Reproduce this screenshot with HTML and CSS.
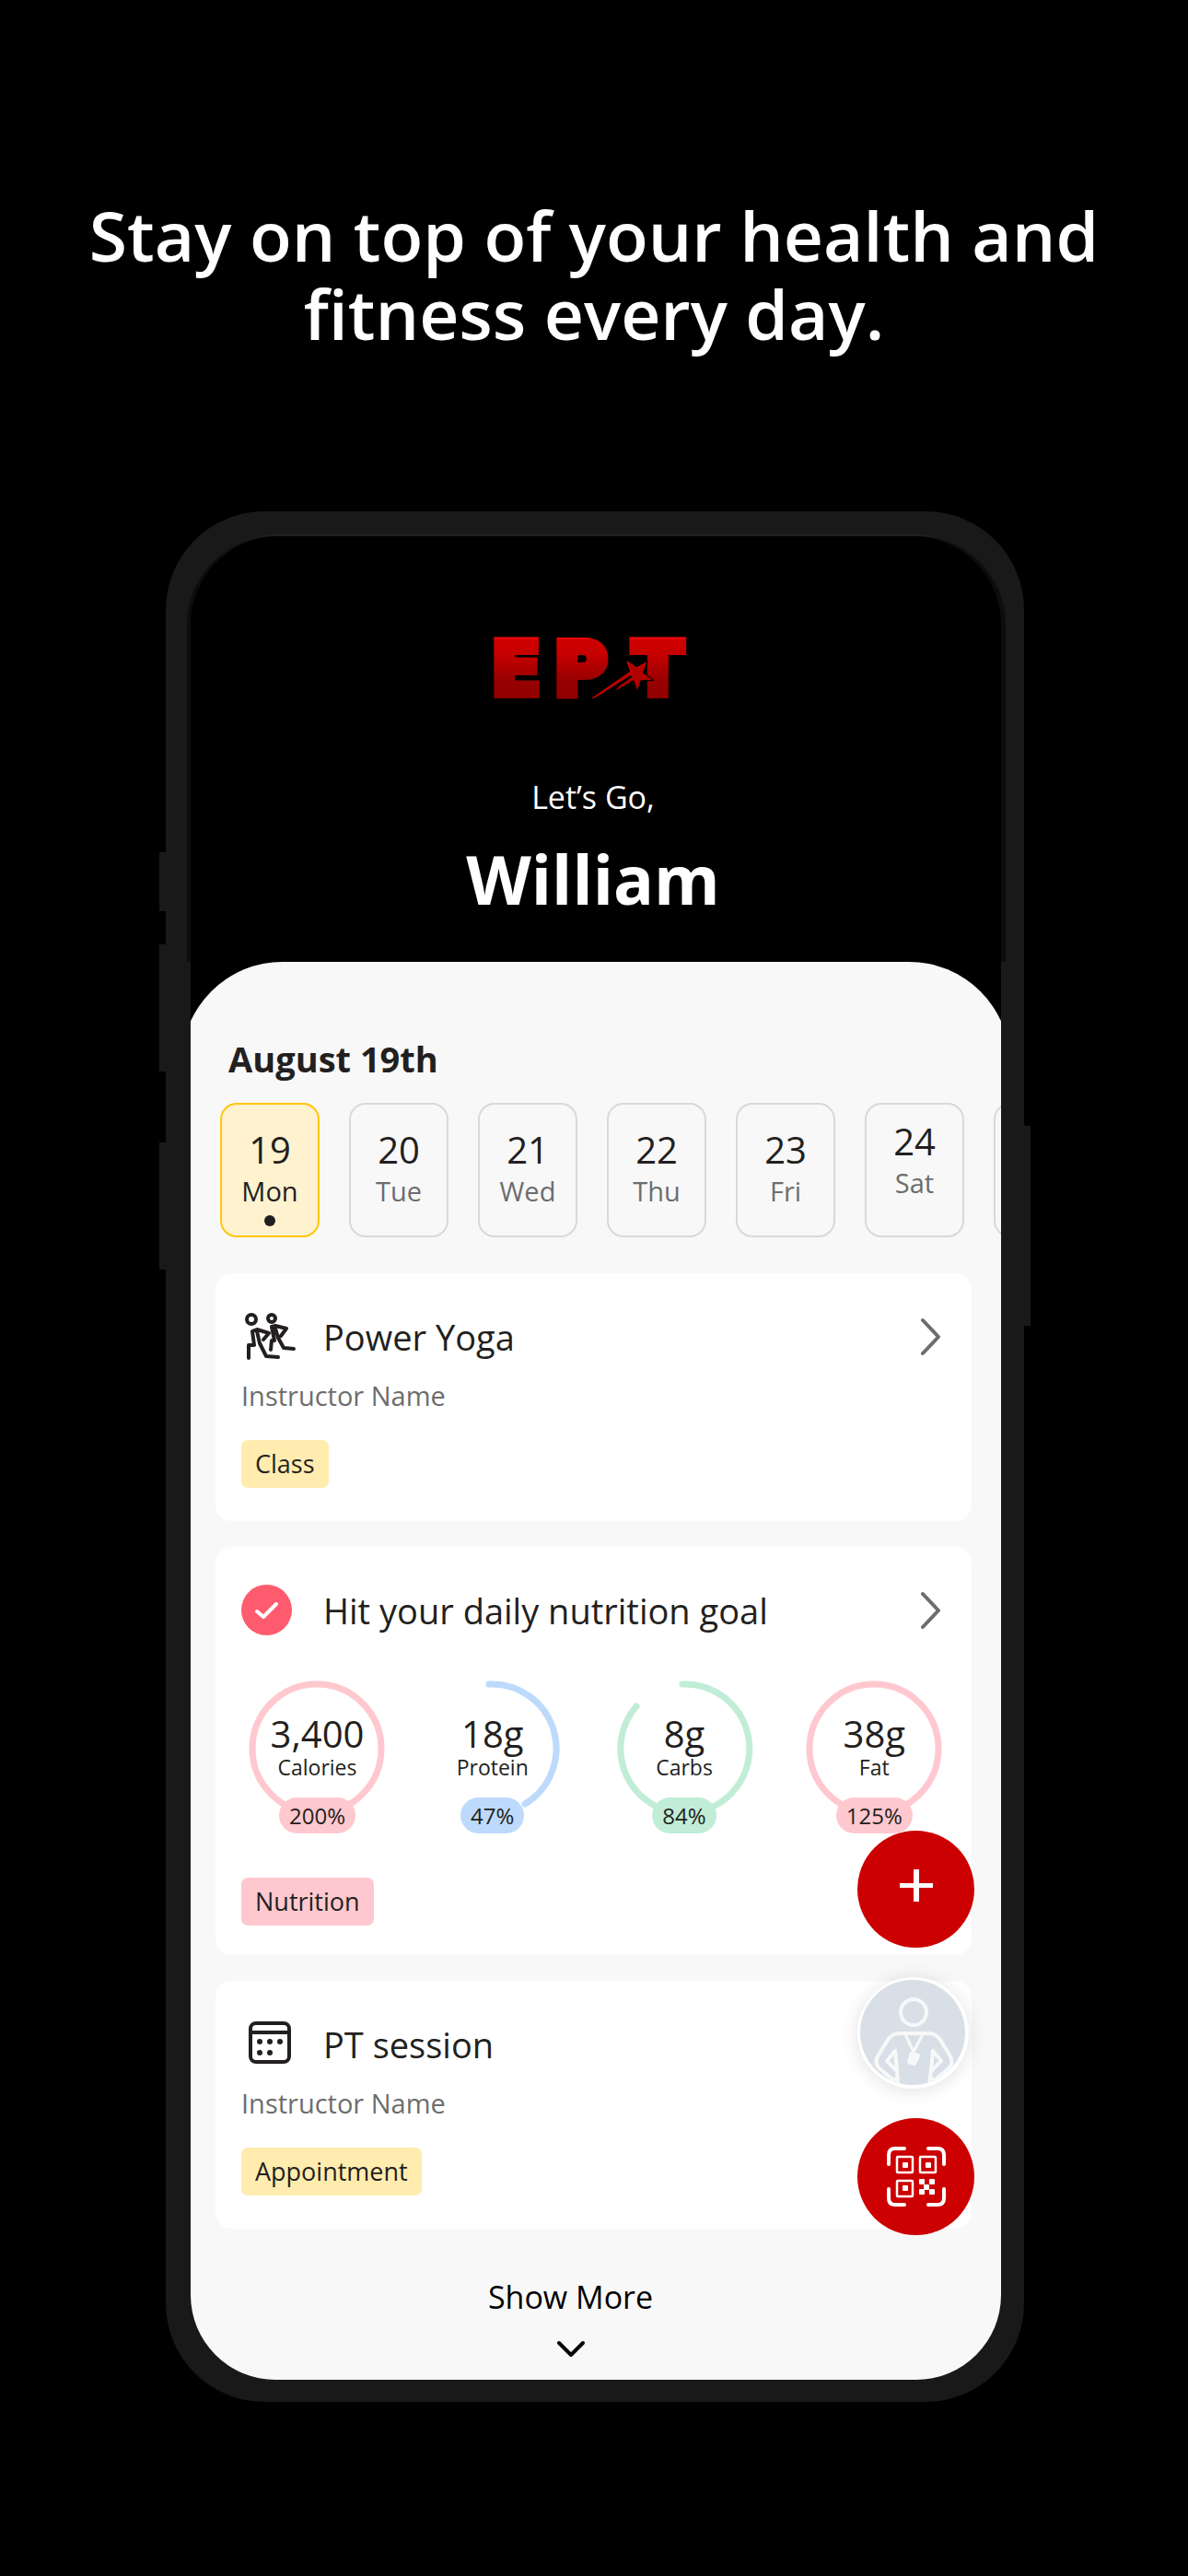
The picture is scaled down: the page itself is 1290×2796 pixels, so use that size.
FILE: index.html
```html
<!DOCTYPE html>
<html lang="en">
<head>
	<meta charset="UTF-8">
	<meta name="viewport" content="width=device-width, initial-scale=1">
	<title>EPT</title>
	<link rel="stylesheet" href="styles.css">
</head>
<body>

	<main class="page">
		<h1 class="headline">Stay on top of your health and fitness every day.</h1>

		<div class="phone">
			<!-- side buttons -->
			<span class="side-key key-mute"></span>
			<span class="side-key key-up"></span>
			<span class="side-key key-down"></span>
			<span class="side-key key-power"></span>

			<header class="top">
				<svg class="logo" viewBox="0 0 219 66" role="img" aria-label="EPT">
					<defs>
						<linearGradient id="red" gradientUnits="userSpaceOnUse" x1="0" y1="0" x2="0" y2="66">
							<stop offset="0" stop-color="#ff0a0a"/>
							<stop offset="0.04" stop-color="#d00000"/>
							<stop offset="0.3" stop-color="#c40000"/>
							<stop offset="0.7" stop-color="#980000"/>
							<stop offset="1" stop-color="#900000"/>
						</linearGradient>
					</defs>
					<text class="logo-text" x="-2 66 152" y="62" fill="url(#red)" stroke="url(#red)">EPT</text>
					<path d="M108 66 L150 37 L146 26 L156 33 L167 27 L163 38 L173 46 L161 46 L157 57 L153 46 L133 58 L137 53 L151 43 L150 41 L112 65 Z" fill="#b00000" stroke="#000" stroke-width="2" paint-order="stroke"/>
					<path d="M108 66 L150 37 L146 26 L156 33 L167 27" fill="none" stroke="#f00000"/>
				</svg>
				<p class="greeting">Let’s Go,</p>
				<h2 class="name">William</h2>
			</header>

			<div class="clip">
				<section class="sheet">
					<h3 class="date">August 19th</h3>

					<div class="days">
						<button class="day active" type="button"><span class="num">19</span><span class="weekday">Mon</span><i class="dot"></i></button>
						<button class="day" type="button"><span class="num">20</span><span class="weekday">Tue</span></button>
						<button class="day" type="button"><span class="num">21</span><span class="weekday">Wed</span></button>
						<button class="day" type="button"><span class="num">22</span><span class="weekday">Thu</span></button>
						<button class="day" type="button"><span class="num">23</span><span class="weekday">Fri</span></button>
						<button class="day raised" type="button"><span class="num">24</span><span class="weekday">Sat</span></button>
						<button class="day" type="button" aria-label="Next day"></button>
					</div>

					<article class="card">
						<div class="card-head">
							<svg class="icon" viewBox="0 0 55 55" fill="none" stroke="#231f20" stroke-width="4" stroke-linecap="round" stroke-linejoin="round">
								<circle cx="11" cy="9" r="5"/>
								<circle cx="33" cy="8" r="4"/>
								<path d="M8 51V37H14L12 22L17 20L30 24L24 31M17 22L20 35L27 49L40 50"/>
								<path d="M32 42L33 32H36L33 17L37 16L49 19L43 27M37 19L40 29L46 40L57 41"/>
							</svg>
							<h4 class="title">Power Yoga</h4>
							<a class="go" href="#" aria-label="Open Power Yoga">
								<svg width="24" height="41" viewBox="0 0 24 41"><path d="M3 3L20 21L3 39"/></svg>
							</a>
						</div>
						<p class="sub">Instructor Name</p>
						<span class="tag">Class</span>
					</article>

					<article class="card nutrition">
						<div class="card-head">
							<svg class="icon" viewBox="0 0 55 55">
								<circle cx="27.5" cy="27.5" r="27.5" fill="#ff5b6e"/>
								<path d="M17 29L24 35L38 21" fill="none" stroke="#fff" stroke-width="4" stroke-linecap="round" stroke-linejoin="round"/>
							</svg>
							<h4 class="title">Hit your daily nutrition goal</h4>
							<a class="go" href="#" aria-label="Open nutrition goal">
								<svg width="24" height="41" viewBox="0 0 24 41"><path d="M3 3L20 21L3 39"/></svg>
							</a>
						</div>

						<div class="rings">
							<div class="ring pink">
								<svg viewBox="0 0 147 147"><circle cx="73" cy="73" r="70"/></svg>
								<div class="ring-text">
									<span class="amount">3,400</span>
									<span class="label">Calories</span>
									<span class="pct">200%</span>
								</div>
							</div>
							<div class="ring blue">
								<svg viewBox="0 0 147 147"><path d="M70 3A70 70 0 0 1 109 133"/></svg>
								<div class="ring-text">
									<span class="amount">18g</span>
									<span class="label">Protein</span>
									<span class="pct">47%</span>
								</div>
							</div>
							<div class="ring green">
								<svg viewBox="0 0 147 147"><path d="M71 3A70 70 0 1 1 21 27"/></svg>
								<div class="ring-text">
									<span class="amount">8g</span>
									<span class="label">Carbs</span>
									<span class="pct">84%</span>
								</div>
							</div>
							<div class="ring pink">
								<svg viewBox="0 0 147 147"><circle cx="73" cy="73" r="70"/></svg>
								<div class="ring-text">
									<span class="amount">38g</span>
									<span class="label">Fat</span>
									<span class="pct">125%</span>
								</div>
							</div>
						</div>
						<span class="tag">Nutrition</span>
					</article>

					<article class="card">
						<div class="card-head">
							<svg class="icon" viewBox="0 0 55 55" fill="none" stroke="#231f20" stroke-width="4">
								<rect x="10" y="5" width="42" height="42" rx="6"/>
								<path d="M10 15H52"/>
								<g fill="#231f20" stroke="none">
									<circle cx="20" cy="25" r="3"/>
									<circle cx="31" cy="25" r="3"/>
									<circle cx="42" cy="25" r="3"/>
									<circle cx="20" cy="37" r="3"/>
									<circle cx="31" cy="37" r="3"/>
								</g>
							</svg>
							<h4 class="title">PT session</h4>
						</div>
						<p class="sub">Instructor Name</p>
						<span class="tag">Appointment</span>
					</article>

					<button class="more" type="button">
						Show More
						<svg width="30" height="18" viewBox="0 0 30 18"><path d="M2 2L15 15L28 2"/></svg>
					</button>
				</section>
			</div>

			<!-- floating buttons -->
			<div class="fabs">
				<button class="fab" type="button" aria-label="Add">
					<svg viewBox="0 0 127 127" fill="#fff"><path d="M61 42H67V57H82V62H67V77H61V62H46V57H61Z"/></svg>
				</button>
				<button class="fab coach" type="button" aria-label="Coach">
					<svg viewBox="0 0 121 121" fill="none" stroke="#f7f8f8" stroke-width="4" stroke-linecap="round" stroke-linejoin="round">
						<clipPath id="round"><circle cx="60" cy="60" r="57"/></clipPath>
						<circle cx="60" cy="60" r="57" fill="#d9dfe6" stroke="none"/>
						<g clip-path="url(#round)">
							<circle cx="61" cy="38" r="14"/>
							<path d="M37 110L24 99Q18 93 22 86L33 68Q38 61 45 61H77Q85 61 90 68L101 86Q105 93 99 99L86 110"/>
							<path d="M44 117L43 101L41 80L32 91L43 102M36 112L44 110"/>
							<path d="M78 117L80 101L82 80L91 91L80 102M87 112L79 110"/>
							<path d="M52 62L61 81L71 62" stroke-width="3"/>
							<path d="M59 83L66 85L62 94L56 92Z" fill="#f7f8f8"/>
						</g>
					</svg>
				</button>
				<button class="fab" type="button" aria-label="Scan QR code">
					<svg viewBox="0 0 127 127" fill="none" stroke="#fff" stroke-width="4" stroke-linecap="round">
						<path d="M34 50V40Q34 33 41 33H51M77 33H87Q94 33 94 40V50M94 77V87Q94 94 87 94H77M51 94H41Q34 94 34 87V77"/>
						<g stroke-width="2.5">
							<rect x="43" y="42" width="17" height="17" rx="1"/>
							<rect x="68" y="42" width="17" height="17" rx="1"/>
							<rect x="43" y="68" width="17" height="17" rx="1"/>
						</g>
						<g fill="#fff" stroke="none">
							<rect x="49" y="48" width="6" height="6" rx="1"/>
							<rect x="74" y="48" width="6" height="6" rx="1"/>
							<rect x="49" y="73" width="6" height="6" rx="1"/>
							<rect x="67" y="66" width="6" height="6" rx="1"/>
							<rect x="78" y="66" width="6" height="6" rx="1"/>
							<rect x="72" y="72" width="6" height="6" rx="1"/>
							<rect x="67" y="77" width="6" height="6" rx="1"/>
							<rect x="78" y="77" width="6" height="6" rx="1"/>
						</g>
					</svg>
				</button>
			</div>
		</div>
	</main>

</body>
</html>
```

FILE: styles.css
```css
*{
	box-sizing: border-box;
}
body{
	margin: 0;
	background: #000;
	color: #231f20;
	font-family: "Open Sans", "Noto Sans", sans-serif;
}
h1,h2,h3,h4,p{
	margin: 0;
	font-weight: 400;
}
button{
	padding: 0;
	border: 0;
	background: none;
	color: inherit;
	font: inherit;
	cursor: pointer;
}
svg{
	display: block;
	overflow: visible;
}

.page{
	padding: 213px 0 189px;
}
.headline{
	padding: 0 60px;
	color: #fff;
	font-size: 75px;
	font-weight: 600;
	line-height: 85px;
	text-align: center;
}

/* phone body */
.phone{
	position: relative;
	margin: 172px 178px 0 180px;
	padding: 27px 25px 24px 27px;
	border-radius: 107px;
	background: #191919;
}
.side-key{
	position: absolute;
	left: -7px;
	width: 7px;
	height: 138px;
	background: #191919;
}
.key-mute{
	top: 370px;
	height: 64px;
}
.key-up{
	top: 470px;
}
.key-down{
	top: 685px;
}
.key-power{
	top: 667px;
	right: -7px;
	left: auto;
	height: 217px;
}

.top{
	display: flex;
	flex-direction: column;
	align-items: center;
	padding: 110px 6px 46px 0;
	border-radius: 96px 96px 0 0;
	background: #000;
	box-shadow: -4px 0 #0d0d0d, 5px 0 #0d0d0d, 0 -2px #231f20;
	color: #fff;
}
.logo{
	width: 219px;
	height: 66px;
}
.logo-text{
	font-family: "DejaVu Sans", sans-serif;
	font-size: 80px;
	font-weight: 700;
	stroke-width: 8px;
}
.greeting{
	margin-top: 85px;
	font-size: 34px;
	line-height: 44px;
}
.name{
	margin-top: 23px;
	font-size: 73px;
	font-weight: 700;
	line-height: 88px;
}

.clip{
	overflow: hidden;
	border-radius: 0 0 92px 92px;
	background: #000;
}
.sheet{
	margin: 0 -10px;
	padding: 80px 42px 24px 37px;
	border-radius: 110px 110px 0 0;
	background: #f8f8f8;
}
.date{
	padding-left: 14px;
	font-size: 38px;
	font-weight: 700;
	line-height: 50px;
}

/* day strip */
.days{
	display: flex;
	gap: 32px;
	margin: 23px -42px 39px 5px;
	overflow: hidden;
}
.day{
	display: flex;
	flex: none;
	flex-direction: column;
	align-items: center;
	justify-content: flex-start;
	width: 108px;
	height: 146px;
	padding-top: 27px;
	border: 2px solid #d9d9d9;
	border-radius: 18px;
}
.day.raised{
	padding-top: 18px;
}
.day.active{
	border-color: #ffc60b;
	background: #fff2cf;
}
.num{
	font-size: 40px;
	line-height: 44px;
}
.weekday{
	margin-top: 5px;
	color: #6d6d6d;
	font-size: 29px;
	line-height: 36px;
}
.active .weekday{
	color: #231f20;
}
.dot{
	width: 12px;
	height: 12px;
	margin-top: 8px;
	border-radius: 50%;
	background: #231f20;
}

/* cards */
.card{
	margin-bottom: 28px;
	padding: 41px 32px 36px 28px;
	border-radius: 18px;
	background: #fff;
}
.card-head{
	display: flex;
	align-items: center;
	height: 55px;
}
.icon{
	width: 55px;
	height: 55px;
	margin-right: 34px;
}
.title{
	flex: 1;
	font-size: 38px;
	line-height: 52px;
}
.go path,.more path{
	fill: none;
	stroke: #6d6d6d;
	stroke-width: 4px;
	stroke-linecap: round;
	stroke-linejoin: round;
}
.sub{
	margin-top: 19px;
	color: #6d6d6d;
	font-size: 29px;
	line-height: 36px;
}
.tag{
	display: inline-block;
	margin-top: 30px;
	padding: 0 15px;
	border-radius: 7px;
	background: #ffecae;
	font-size: 27px;
	line-height: 52px;
	vertical-align: top;
}
.nutrition{
	padding-bottom: 32px;
}
.nutrition .tag{
	margin-top: 48px;
	background: #ffc8cf;
}

/* macro rings */
.rings{
	display: grid;
	grid-template-columns: 190fr 208fr 206fr 147fr;
	margin: 50px 0 0 9px;
}
.ring{
	display: grid;
	width: 147px;
}
.ring > *{
	grid-area: 1 / 1;
}
.ring > svg{
	width: 147px;
	height: 147px;
	fill: none;
	stroke-width: 7px;
	stroke-linecap: round;
}
.ring-text{
	display: flex;
	flex-direction: column;
	align-items: center;
	padding-top: 35px;
}
.amount{
	font-size: 40px;
	line-height: 44px;
}
.label{
	font-size: 23px;
	line-height: 28px;
}
.pct{
	margin-top: 19px;
	padding: 0 11px;
	border-radius: 20px;
	font-size: 24px;
	line-height: 39px;
}
.pink svg{
	stroke: #ffc8cf;
}
.pink .pct{
	background: #ffc8cf;
}
.blue svg{
	stroke: #bddafc;
}
.blue .pct{
	background: #bddafc;
}
.green svg{
	stroke: #c1edd7;
}
.green .pct{
	background: #c1edd7;
}

.more{
	display: flex;
	flex-direction: column;
	align-items: center;
	gap: 26px;
	width: 100%;
	margin-top: 52px;
	padding-right: 50px;
	color: #000;
	font-size: 34px;
	line-height: 44px;
}
.more path{
	stroke: #000;
}

.fabs{
	position: absolute;
	right: 54px;
	bottom: 181px;
	display: flex;
	flex-direction: column;
	gap: 32px;
}
.fab{
	width: 127px;
	height: 127px;
	border-radius: 50%;
	background: #c00;
}
.coach{
	width: 121px;
	height: 121px;
	background: #fff;
	box-shadow: 0 2px 20px rgba(0, 0, 0, 0.12);
}
```
